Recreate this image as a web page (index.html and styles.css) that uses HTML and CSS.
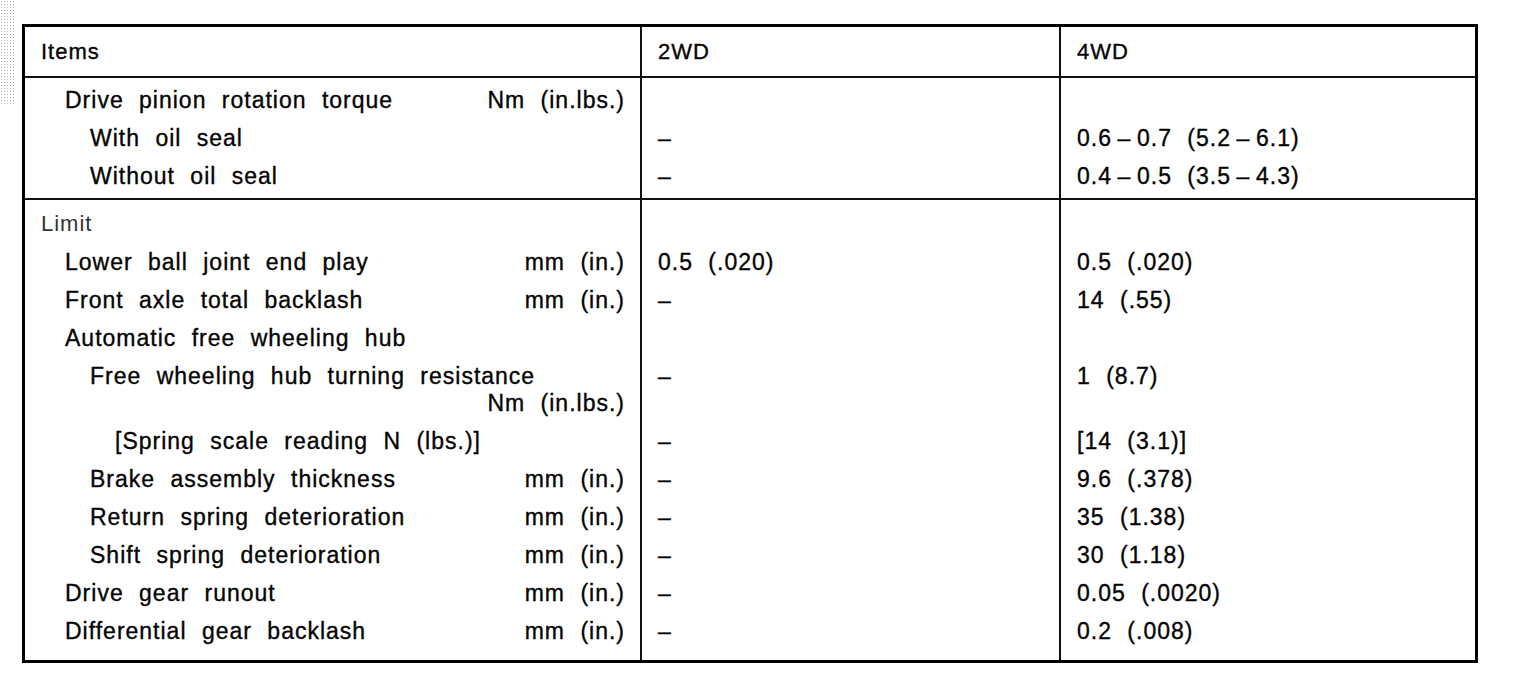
FILE: index.html
```html
<!DOCTYPE html>
<html lang="en">
<head>
    <meta charset="UTF-8">
    <meta name="viewport" content="width=device-width, initial-scale=1.0">
    <title>Front axle - service specifications</title>
<link rel="stylesheet" href="styles.css">
</head>
<body>
<div class="page">
    <table class="spec">
        <thead>
            <tr>
                <th class="c-item">Items</th>
                <th class="c-2wd">2WD</th>
                <th class="c-4wd">4WD</th>
            </tr>
        </thead>
        <tbody class="group group-std">
            <tr class="first">
                <td class="item lv1"><div class="line"><span>Drive pinion rotation torque</span><span class="unit">Nm (in.lbs.)</span></div></td>
                <td></td>
                <td></td>
            </tr>
            <tr>
                <td class="item lv2"><div class="line"><span>With oil seal</span></div></td>
                <td>–</td>
                <td>0.6&#8201;–&#8201;0.7 (5.2&#8201;–&#8201;6.1)</td>
            </tr>
            <tr class="last">
                <td class="item lv2"><div class="line"><span>Without oil seal</span></div></td>
                <td>–</td>
                <td>0.4&#8201;–&#8201;0.5 (3.5&#8201;–&#8201;4.3)</td>
            </tr>
        </tbody>
        <tbody class="group group-limit">
            <tr class="first">
                <td class="item lv0 light"><div class="line"><span>Limit</span></div></td>
                <td></td>
                <td></td>
            </tr>
            <tr>
                <td class="item lv1"><div class="line"><span>Lower ball joint end play</span><span class="unit">mm (in.)</span></div></td>
                <td>0.5 (.020)</td>
                <td>0.5 (.020)</td>
            </tr>
            <tr>
                <td class="item lv1"><div class="line"><span>Front axle total backlash</span><span class="unit">mm (in.)</span></div></td>
                <td>–</td>
                <td>14 (.55)</td>
            </tr>
            <tr>
                <td class="item lv1"><div class="line"><span>Automatic free wheeling hub</span></div></td>
                <td></td>
                <td></td>
            </tr>
            <tr>
                <td class="item lv2">
                    <div class="line"><span>Free wheeling hub turning resistance</span></div>
                    <div class="line line-unit"><span class="unit">Nm (in.lbs.)</span></div>
                </td>
                <td>–</td>
                <td>1 (8.7)</td>
            </tr>
            <tr>
                <td class="item lv3"><div class="line"><span>[Spring scale reading N (lbs.)]</span></div></td>
                <td>–</td>
                <td>[14 (3.1)]</td>
            </tr>
            <tr>
                <td class="item lv2"><div class="line"><span>Brake assembly thickness</span><span class="unit">mm (in.)</span></div></td>
                <td>–</td>
                <td>9.6 (.378)</td>
            </tr>
            <tr>
                <td class="item lv2"><div class="line"><span>Return spring deterioration</span><span class="unit">mm (in.)</span></div></td>
                <td>–</td>
                <td>35 (1.38)</td>
            </tr>
            <tr>
                <td class="item lv2"><div class="line"><span>Shift spring deterioration</span><span class="unit">mm (in.)</span></div></td>
                <td>–</td>
                <td>30 (1.18)</td>
            </tr>
            <tr>
                <td class="item lv1"><div class="line"><span>Drive gear runout</span><span class="unit">mm (in.)</span></div></td>
                <td>–</td>
                <td>0.05 (.0020)</td>
            </tr>
            <tr class="last">
                <td class="item lv1"><div class="line"><span>Differential gear backlash</span><span class="unit">mm (in.)</span></div></td>
                <td>–</td>
                <td>0.2 (.008)</td>
            </tr>
        </tbody>
    </table>
</div>
</body>
</html>
```

FILE: styles.css
```css
html, body {margin: 0;padding: 0;background: #fff;}
body {font-family: "Liberation Sans", Arial, sans-serif;color: #050505;}

.page {position: relative;padding: 24px 0 0 22px;}
/* scanner noise on the left page edge */
.page::before {content: "";position: absolute;left: 0;top: 0;width: 14px;height: 105px;background-image: radial-gradient(circle, #9a9a9a 0.8px, transparent 1px);background-size: 3px 3px;opacity: .8;}

.spec {width: 1456px;border: 3px solid #000;border-spacing: 0;border-collapse: separate;table-layout: fixed;font-size: 23px;letter-spacing: 1px;word-spacing: 8px;line-height: 28px;-webkit-text-stroke: 0.35px #000;}
.spec th, .spec td {box-sizing: border-box;padding: 5px 15px 5px 16px;text-align: left;vertical-align: top;font-weight: normal;white-space: nowrap;}
.spec th + th, .spec td + td {border-left: 2px solid #111;}

.c-item {width: 615px;}
.c-2wd {width: 419px;}
.c-4wd {width: 416px;}

.spec thead th {padding-top: 11px;padding-bottom: 10px;border-bottom: 2px solid #111;font-size: 22px;letter-spacing: 1px;word-spacing: 0;}

.group-std .first td {padding-top: 8px;}
.group-std .last td {padding-bottom: 8px;border-bottom: 2px solid #111;}
.group-limit .first td {padding-top: 10px;}
.group-limit .last td {padding-bottom: 15px;}

.item.lv0 {padding-left: 16px;}
.item.lv1 {padding-left: 40px;}
.item.lv2 {padding-left: 65px;}
.item.lv3 {padding-left: 90px;}
.item.light {font-size: 22px;color: #333;-webkit-text-stroke: 0;}

.line {display: flex;justify-content: space-between;}
.line-unit {justify-content: flex-end;margin-top: -1px;}
.unit {margin-left: auto;}
```
